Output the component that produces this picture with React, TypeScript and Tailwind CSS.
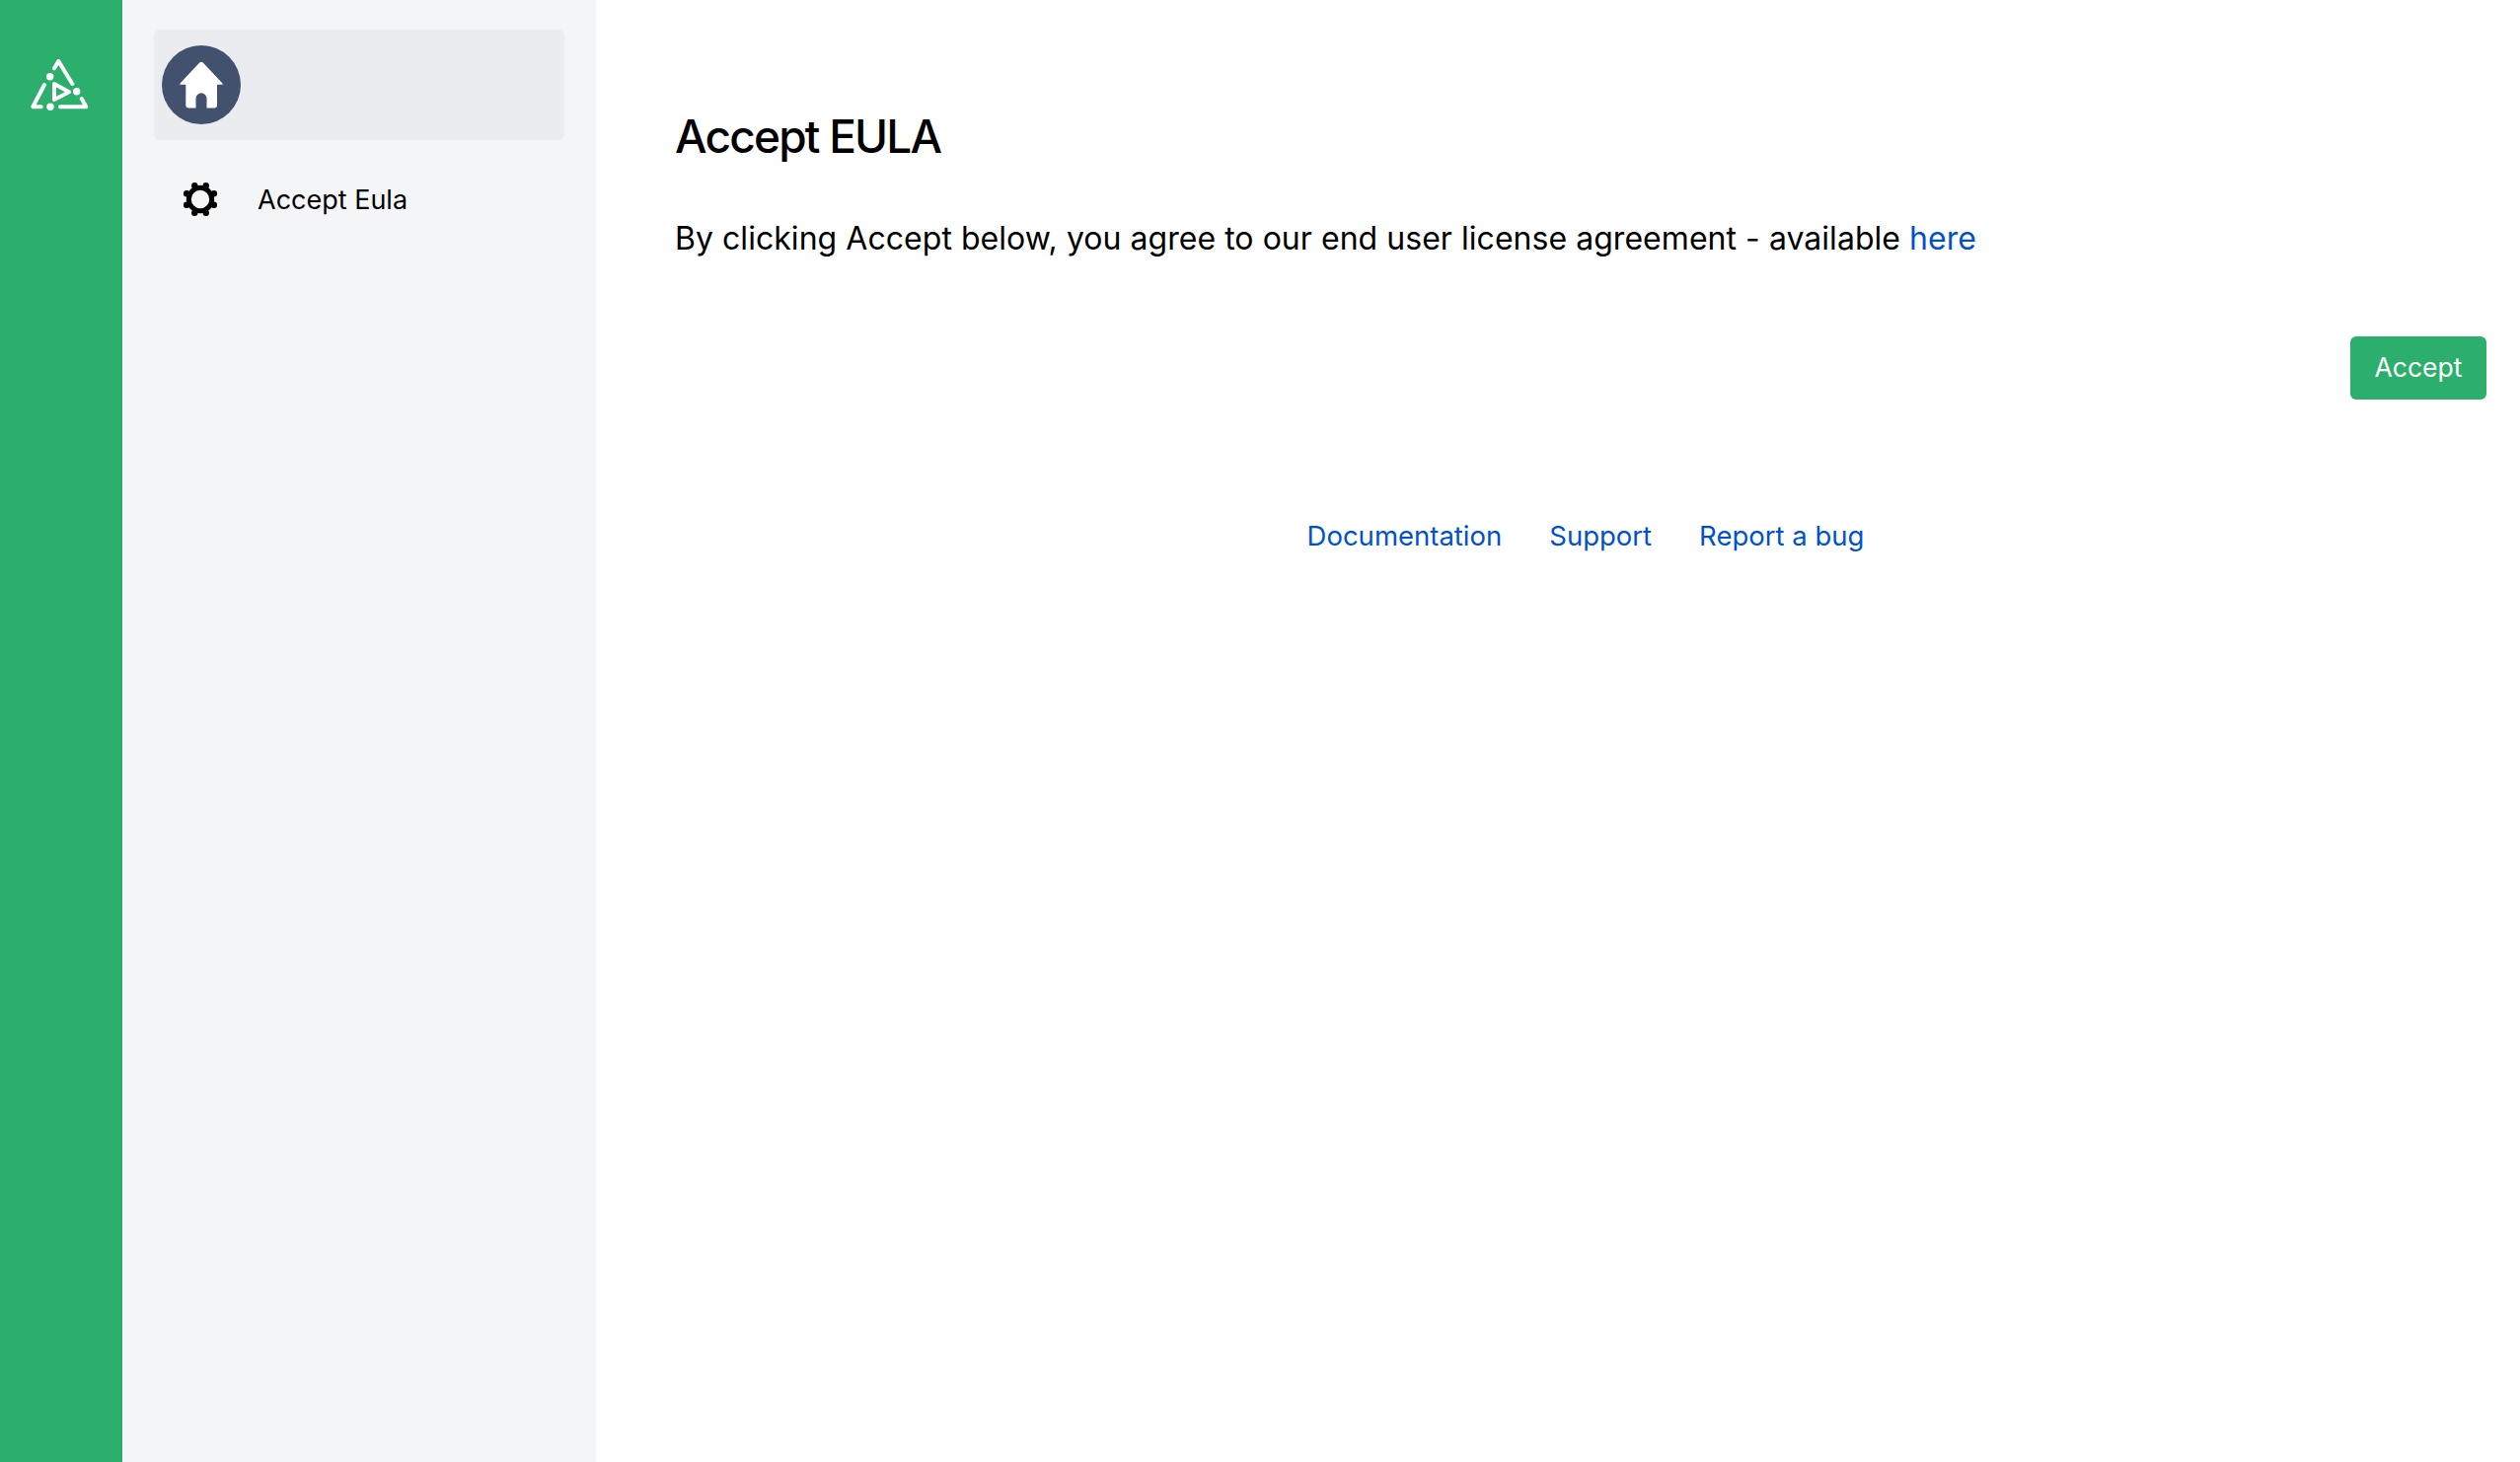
export default function App() {
  return (
    <div className="flex min-h-[1482px] bg-white font-['Inter',sans-serif] text-black">
      <aside className="w-[124px] shrink-0 bg-[#2cae6c] pt-[60px] pl-[30px]">
        <svg width="60" height="54" viewBox="0 0 60 54" fill="none" className="block">
          <g stroke="white" strokeWidth="4" strokeLinecap="round" strokeLinejoin="round">
            <path d="M25 9.300 L29.300 2 L43.300 25" />
            <path d="M15 26 L3.300 48.300 L11.700 48.300" />
            <path d="M25 25 L25 41 L40 33.300 Z" />
            <path d="M31 48.300 L57.300 48.300 L52.700 40" />
          </g>
          <circle cx="20.700" cy="17.700" r="3.700" fill="white" />
          <circle cx="47.700" cy="32.700" r="3.700" fill="white" />
          <circle cx="21" cy="48.300" r="3.700" fill="white" />
        </svg>
      </aside>
      <nav className="w-[480px] shrink-0 bg-[#f4f5f7] px-[32px] pt-[30px]">
        <div className="flex h-[112px] items-center rounded-[6px] bg-[#ebecf0] pl-[8px]">
          <div className="flex h-[80px] w-[80px] items-center justify-center rounded-full bg-[#42526e]">
            <svg width="46" height="48" viewBox="0 0 46 48" fill="white">
              <path d="M21.500 1.300 Q23 0 24.500 1.300 L44.500 22.500 Q45.500 23.800 44 23.800 L39 23.800 L39 44.500 Q39 47.500 36 47.500 L28.500 47.500 L28.500 37.800 A5.500 5.500 0 0 0 17.500 37.800 L17.500 47.500 L10.300 47.500 Q7.300 47.500 7.300 44.500 L7.300 23.800 L2 23.800 Q0.500 23.800 1.500 22.500 Z" />
            </svg>
          </div>
        </div>
        <div className="mt-[18px] flex h-[86px] items-center">
          <div className="flex w-[105px] justify-start pl-[29px]">
            <svg width="36" height="36" viewBox="0 0 36 36" className="mb-[3px] block" fill="black">
              <path
                fillRule="evenodd"
                d="M18 3.800 a14.200 14.200 0 1 0 0 28.400 a14.200 14.200 0 0 0 0-28.400 Z M18 8.800 a9.200 9.200 0 1 1 0 18.400 a9.200 9.200 0 0 1 0-18.400 Z"
              />
              <circle cx="12.260" cy="4.140" r="3.200" />
              <circle cx="23.740" cy="4.140" r="3.200" />
              <circle cx="31.860" cy="12.260" r="3.200" />
              <circle cx="31.860" cy="23.740" r="3.200" />
              <circle cx="23.740" cy="31.860" r="3.200" />
              <circle cx="12.260" cy="31.860" r="3.200" />
              <circle cx="4.140" cy="23.740" r="3.200" />
              <circle cx="4.140" cy="12.260" r="3.200" />
            </svg>
          </div>
          <span className="text-[27px] leading-[40px]">Accept Eula</span>
        </div>
      </nav>
      <main className="min-w-0 flex-1 pl-[80px] pr-[34px] pt-[108px]">
        <h1 className="text-[46px] font-medium leading-[60px] tracking-[-1.8px]">Accept EULA</h1>
        <p className="mt-[50px] text-[32px] leading-[48px] tracking-[0.04px]">
          By clicking Accept below, you agree to our end user license agreement - available{" "}
          <a className="text-[#0052cc]">here</a>
        </p>
        <div className="mt-[75px] flex justify-end">
          <button className="flex h-[64px] w-[138px] items-center justify-center rounded-[6px] bg-[#2cae6c] text-[26.500px] text-white">
            Accept
          </button>
        </div>
        <div className="ml-[10px] mt-[118px] flex justify-center gap-[48px] text-[27.500px] leading-[40px] text-[#0052cc]">
          <a>Documentation</a>
          <a>Support</a>
          <a>Report a bug</a>
        </div>
      </main>
    </div>
  );
}
